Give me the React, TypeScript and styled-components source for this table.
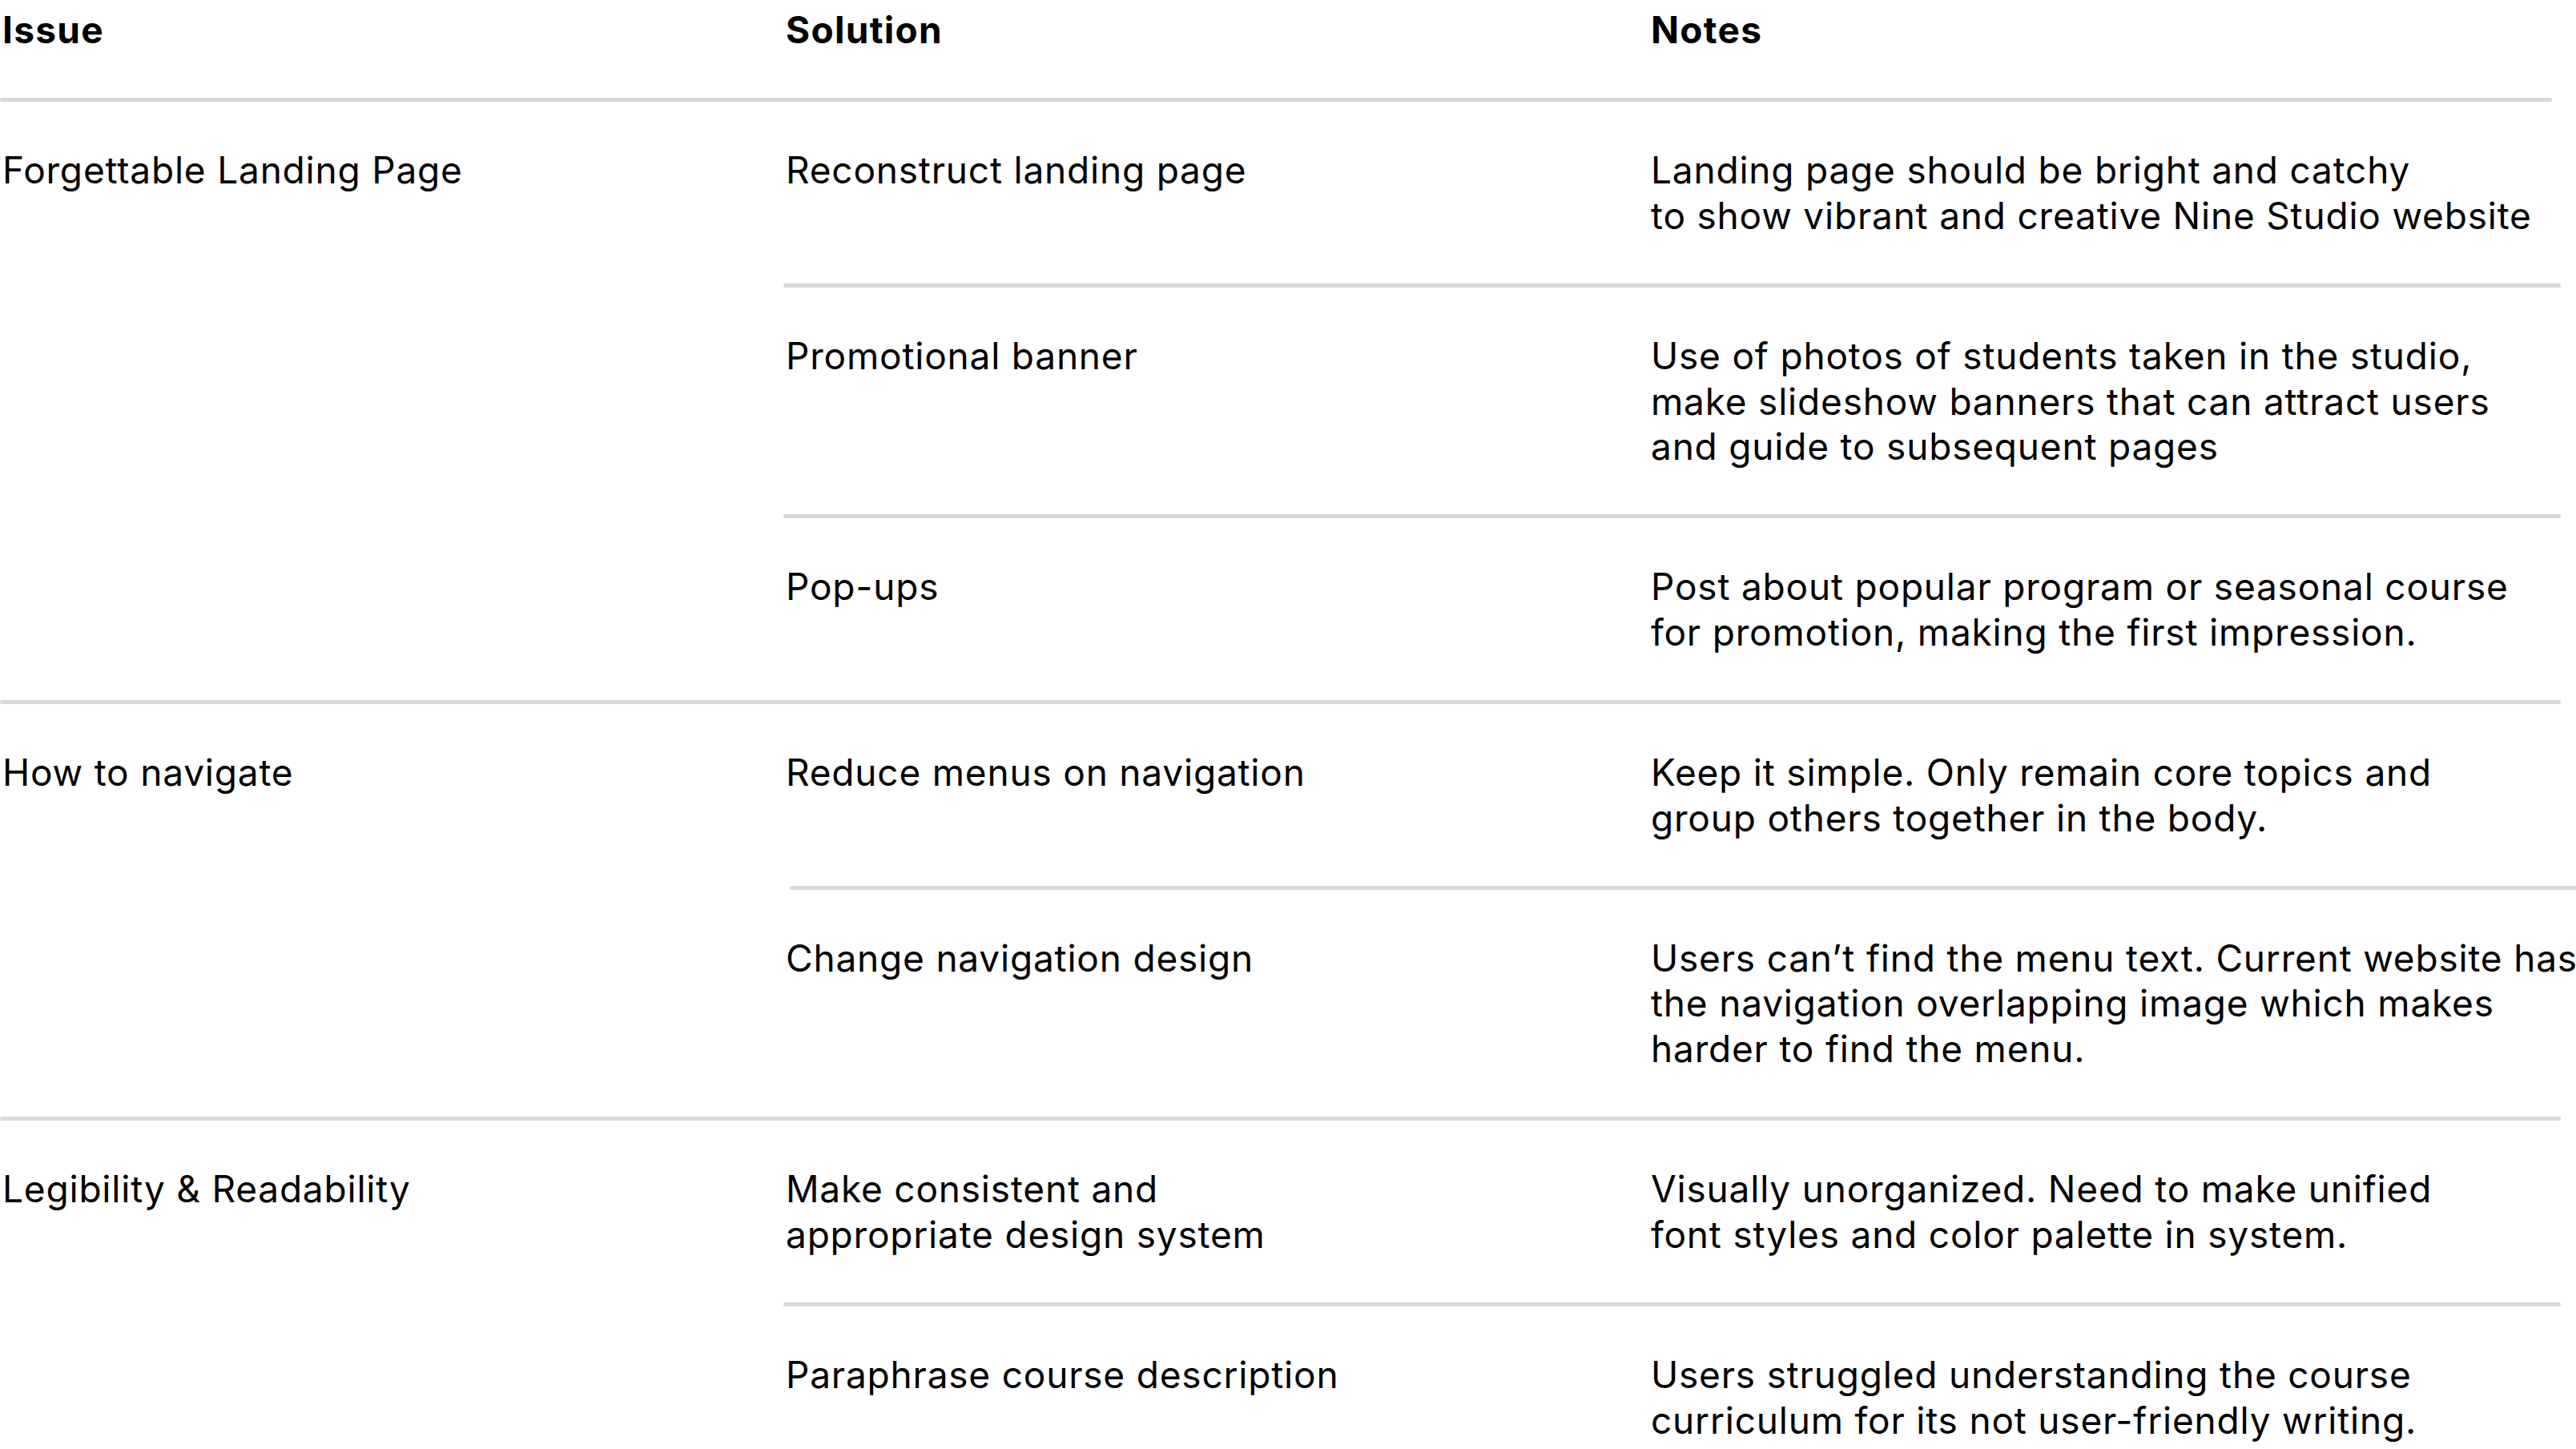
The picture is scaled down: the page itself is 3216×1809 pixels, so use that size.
import styled, { createGlobalStyle } from "styled-components";

const GlobalStyle = createGlobalStyle`
  html, body {
    margin: 0;
    padding: 0;
    background: #ffffff;
  }
  body {
    font-family: Inter, "Noto Sans", "Liberation Sans", sans-serif;
    color: #000000;
    -webkit-font-smoothing: antialiased;
  }
`;

const Table = styled.main`
  display: flex;
  flex-direction: column;
  width: 3197px;
`;

const HeaderRow = styled.div`
  display: grid;
  grid-template-columns: 978px 1080px 1fr;
  padding: 9px 0 57px 3px;
`;

const HeadCell = styled.div`
  font-size: 46px;
  line-height: 56.4px;
  font-weight: 700;
  letter-spacing: 1.3px;
`;

const Rule = styled.div<{ $inset?: number; $trim?: number }>`
  height: 5px;
  border-radius: 3px;
  background: #d9d9d9;
  margin-left: ${({ $inset }) => $inset ?? 0}px;
  margin-right: ${({ $trim }) => $trim ?? 0}px;
  flex-shrink: 0;
`;

const Group = styled.section`
  display: grid;
  grid-template-columns: 978px 1fr;
`;

const IssueCell = styled.div`
  font-size: 46px;
  line-height: 56.4px;
  letter-spacing: 0.8px;
  padding: 57px 0 57px 3px;
  white-space: nowrap;
`;

const SubRows = styled.div`
  display: flex;
  flex-direction: column;
`;

const SubRow = styled.div`
  display: grid;
  grid-template-columns: 1080px 1fr;
  padding: 57px 0 57px 3px;
`;

const Cell = styled.div`
  font-size: 46px;
  line-height: 56.4px;
  letter-spacing: 0.8px;
  white-space: nowrap;
`;

type Item = { solution: string[]; notes: string[] };
type Section = { issue: string; items: Item[]; ruleInset?: number; ruleTrim?: number };

const sections: Section[] = [
  {
    issue: "Forgettable Landing Page",
    items: [
      {
        solution: ["Reconstruct landing page"],
        notes: [
          "Landing page should be bright and catchy",
          "to show vibrant and creative Nine Studio website",
        ],
      },
      {
        solution: ["Promotional banner"],
        notes: [
          "Use of photos of students taken in the studio,",
          "make slideshow banners that can attract users",
          "and guide to subsequent pages",
        ],
      },
      {
        solution: ["Pop-ups"],
        notes: [
          "Post about popular program or seasonal course",
          "for promotion, making the first impression.",
        ],
      },
    ],
  },
  {
    issue: "How to navigate",
    ruleInset: 8,
    ruleTrim: -7,
    items: [
      {
        solution: ["Reduce menus on navigation"],
        notes: [
          "Keep it simple. Only remain core topics and",
          "group others together in the body.",
        ],
      },
      {
        solution: ["Change navigation design"],
        notes: [
          "Users can\u2019t find the menu text. Current website has",
          "the navigation overlapping image which makes",
          "harder to find the menu.",
        ],
      },
    ],
  },
  {
    issue: "Legibility & Readability",
    items: [
      {
        solution: ["Make consistent and", "appropriate design system"],
        notes: [
          "Visually unorganized. Need to make unified",
          "font styles and color palette in system.",
        ],
      },
      {
        solution: ["Paraphrase course description"],
        notes: [
          "Users struggled understanding the course",
          "curriculum for its not user-friendly writing.",
        ],
      },
    ],
  },
];

const Lines = ({ lines }: { lines: string[] }) => (
  <>
    {lines.map((line, i) => (
      <div key={i}>{line}</div>
    ))}
  </>
);

export default function App() {
  return (
    <>
      <GlobalStyle />
      <Table>
        <HeaderRow>
          <HeadCell>Issue</HeadCell>
          <HeadCell>Solution</HeadCell>
          <HeadCell>Notes</HeadCell>
        </HeaderRow>
        <Rule $trim={11} />
        {sections.map((section, si) => (
          <div key={section.issue}>
            {si > 0 && <Rule />}
            <Group>
              <IssueCell>{section.issue}</IssueCell>
              <SubRows>
                {section.items.map((item, ii) => (
                  <div key={ii}>
                    {ii > 0 && (
                      <Rule $inset={section.ruleInset} $trim={section.ruleTrim} />
                    )}
                    <SubRow>
                      <Cell>
                        <Lines lines={item.solution} />
                      </Cell>
                      <Cell>
                        <Lines lines={item.notes} />
                      </Cell>
                    </SubRow>
                  </div>
                ))}
              </SubRows>
            </Group>
          </div>
        ))}
      </Table>
    </>
  );
}
